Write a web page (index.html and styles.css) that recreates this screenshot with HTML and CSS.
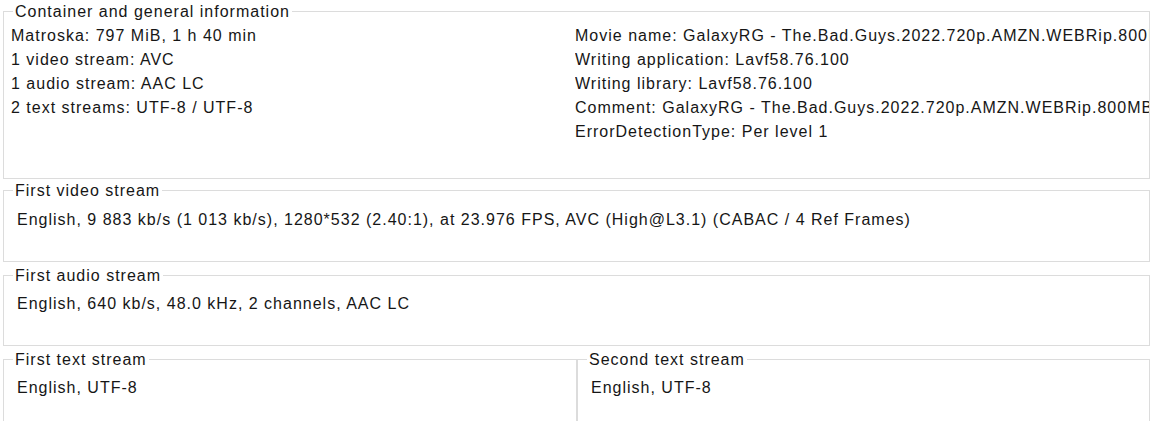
FILE: index.html
```html
<!DOCTYPE html>
<html lang="en">
<head>
<meta charset="utf-8">
<title>MediaInfo</title>
<link rel="stylesheet" href="styles.css">
</head>
<body>
<div class="info">
  <fieldset class="group group-general">
    <legend>Container and general information</legend>
    <div class="cols">
      <div class="col">
        <div class="line">Matroska: 797 MiB, 1 h 40 min</div>
        <div class="line">1 video stream: AVC</div>
        <div class="line">1 audio stream: AAC LC</div>
        <div class="line">2 text streams: UTF-8 / UTF-8</div>
      </div>
      <div class="col col-right">
        <div class="line">Movie name: GalaxyRG - The.Bad.Guys.2022.720p.AMZN.WEBRip.800MB.x264-GalaxyRG</div>
        <div class="line">Writing application: Lavf58.76.100</div>
        <div class="line">Writing library: Lavf58.76.100</div>
        <div class="line">Comment: GalaxyRG - The.Bad.Guys.2022.720p.AMZN.WEBRip.800MB.x264-GalaxyRG</div>
        <div class="line">ErrorDetectionType: Per level 1</div>
      </div>
    </div>
  </fieldset>
  <fieldset class="group group-stream group-video">
    <legend>First video stream</legend>
    <div class="line">English, 9 883 kb/s (1 013 kb/s), 1280*532 (2.40:1), at 23.976 FPS, AVC (High@L3.1) (CABAC / 4 Ref Frames)</div>
  </fieldset>
  <fieldset class="group group-stream group-audio">
    <legend>First audio stream</legend>
    <div class="line">English, 640 kb/s, 48.0 kHz, 2 channels, AAC LC</div>
  </fieldset>
  <div class="text-row">
    <fieldset class="group group-stream group-text">
      <legend>First text stream</legend>
      <div class="line">English, UTF-8</div>
    </fieldset>
    <fieldset class="group group-stream group-text">
      <legend>Second text stream</legend>
      <div class="line">English, UTF-8</div>
    </fieldset>
  </div>
</div>
</body>
</html>
```

FILE: styles.css
```css
html, body {
  margin: 0;
  padding: 0;
  background: #ffffff;
  overflow: hidden;
}

body {
  font-family: "Liberation Sans", Arial, sans-serif;
  font-size: 16px;
  letter-spacing: 1px;
  color: #161616;
}

.info {
  display: flex;
  flex-direction: column;
  padding: 0 1px 0 3px;
}

.group {
  margin: 0;
  border: 1px solid #dcdcdc;
  min-width: 0;
}

.group legend {
  line-height: 17px;
  height: 17px;
  padding: 0 2px;
  margin-left: 2px;
}

.line {
  line-height: 24px;
  height: 24px;
  white-space: nowrap;
}

.group-general {
  margin-top: 3px;
  padding: 4px 0 34px 7px;
}

.cols {
  display: grid;
  grid-template-columns: 564px 1fr;
}

.col {
  min-width: 0;
  overflow: hidden;
}

.col-right {
  padding-right: 5px;
}

.group-stream {
  padding: 9px 0 29px 13px;
}

.group-stream legend {
  margin-left: -4px;
}

.group-video {
  margin-top: 3px;
}

.group-audio {
  margin-top: 5px;
  padding-top: 8px;
  padding-bottom: 29px;
}

.text-row {
  display: grid;
  grid-template-columns: 574px 1fr;
  margin-top: 5px;
}

.group-text {
  padding-top: 8px;
  padding-bottom: 40px;
}
```
